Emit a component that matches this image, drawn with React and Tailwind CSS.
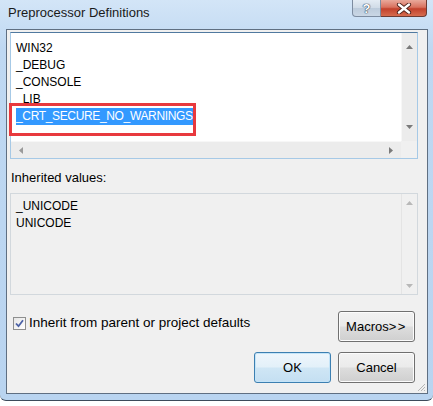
import React from 'react';

const defs = ['WIN32', '_DEBUG', '_CONSOLE', '_LIB'];
const inherited = ['_UNICODE', 'UNICODE'];

function Arrow({ dir, color }) {
  // small scrollbar triangles
  const pts = {
    up: '0,4 3.5,0 7,4',
    down: '0,0 7,0 3.5,4',
    left: '4,0 4,7 0,3.5',
    right: '0,0 0,7 4,3.5',
  }[dir];
  const horiz = dir === 'left' || dir === 'right';
  return (
    <svg width={horiz ? 4 : 7} height={horiz ? 7 : 4} viewBox={horiz ? '0 0 4 7' : '0 0 7 4'}>
      <polygon points={pts} fill={color} />
    </svg>
  );
}

function WinButton({ children, focused, className }) {
  return (
    <button
      className={
        'h-[31px] w-[77px] rounded-[3px] border text-[13px] text-black ' +
        (focused
          ? 'border-[#3c7fb1] bg-[linear-gradient(#eef6fc_0%,#e3f0f9_48%,#cfe6f5_52%,#c4dff2_100%)] shadow-[inset_0_0_0_1px_#c4e4f8] '
          : 'border-[#707070] bg-[linear-gradient(#f2f2f2_0%,#ebebeb_48%,#dddddd_52%,#cfcfcf_100%)] shadow-[inset_0_0_0_1px_#fcfcfc] ') +
        (className || '')
      }
    >
      {children}
    </button>
  );
}

function App() {
  return (
    <div className="w-[433px] h-[406px] bg-white font-['Liberation_Sans',Arial,sans-serif] overflow-hidden">
      <div className="w-[433px] h-[401px] rounded-b-[6px] border-b border-[#3d4a5a] bg-[linear-gradient(#d3e5f7_0%,#bfd8f2_12%,#b9d4f0_100%)] flex flex-col">
        {/* title bar */}
        <div className="h-[29px] flex justify-between items-start shrink-0">
          <div className="pl-[8px] pt-[5px] text-[13px] leading-[16px] text-[#1a1a1a]">Preprocessor Definitions</div>
          <div className="flex mr-[6px]">
            <div className="w-[29px] h-[17px] rounded-bl-[4px] border border-t-0 border-[#7d8ca0] bg-[linear-gradient(#e4ecf4_0%,#d0dbe7_50%,#bccbdb_51%,#cad7e5_100%)] flex items-center justify-center text-[13px] font-bold leading-none text-white [text-shadow:0_0_1px_#33455a,0_0_1px_#33455a,0_0_1px_#33455a]">
              ?
            </div>
            <div className="w-[46px] h-[17px] rounded-br-[4px] border border-l-0 border-t-0 border-[#6d3a32] bg-[linear-gradient(#e9a99b_0%,#d9725f_45%,#c2412c_55%,#d66c4f_100%)] flex items-center justify-center">
              <svg width="16" height="11" viewBox="0 0 16 11">
                <path d="M3 1.5 L13 9.5 M13 1.5 L3 9.5" stroke="#4a1f18" strokeWidth="4.2" strokeLinecap="round" />
                <path d="M3 1.5 L13 9.5 M13 1.5 L3 9.5" stroke="#ffffff" strokeWidth="2.4" strokeLinecap="round" />
              </svg>
            </div>
          </div>
        </div>

        {/* client area */}
        <div className="relative ml-[6px] w-[422px] h-[365px] border border-[#5f6f82] bg-[#f0f0f0] pl-[3px] pt-[2px] text-[12px] text-black">
          {/* preprocessor edit box */}
          <div className="relative w-[408px] h-[127px] border border-[#a6c9e6] border-t-[#50799f] bg-white grid grid-cols-[390px_16px] grid-rows-[108px_17px]">
            <div className="pl-[5px] pt-[7px] leading-[17px]">
              {defs.map((d) => (
                <div key={d}>{d}</div>
              ))}
              <div>
                <span className="inline-block bg-[#3399ff] text-white tracking-[-0.35px]">_CRT_SECURE_NO_WARNINGS</span>
              </div>
            </div>
            <div className="bg-[#ececec] border-l border-[#f7f7f7] flex flex-col items-center justify-between py-[12px]">
              <Arrow dir="up" color="#7a7a7a" />
              <Arrow dir="down" color="#7a7a7a" />
            </div>
            <div className="bg-[#ececec] border-t border-[#f7f7f7] flex items-center justify-between px-[8px]">
              <Arrow dir="left" color="#9a9a9a" />
              <Arrow dir="right" color="#7a7a7a" />
            </div>
            <div className="bg-[#f0f0f0]"></div>
            {/* red annotation */}
            <div className="absolute left-[-2px] top-[70px] w-[187px] h-[33px] border-[3px] border-[#e8393e]"></div>
          </div>

          <div className="mt-[11px] pl-[1px] text-[13px] leading-[15px]">Inherited values:</div>

          {/* inherited box */}
          <div className="mt-[8px] w-[408px] h-[102px] border border-[#d2d8dd] bg-[#f0f0f0] flex">
            <div className="flex-1 pl-[5px] pt-[4px] leading-[17px]">
              {inherited.map((d) => (
                <div key={d}>{d}</div>
              ))}
            </div>
            <div className="w-[16px] border-l border-[#e4e4e4] flex flex-col items-center justify-between pt-[7px] pb-[6px]">
              <Arrow dir="up" color="#b8b8b8" />
              <Arrow dir="down" color="#b8b8b8" />
            </div>
          </div>

          {/* bottom controls */}
          <div className="mt-[16px] w-[405px]">
            <div className="flex justify-between items-start">
              <label className="flex items-center mt-[5px] ml-[3px] leading-[14px]">
                <span className="w-[13px] h-[13px] border border-[#8e8f8f] bg-[linear-gradient(135deg,#e6e6e6,#ffffff)] flex items-center justify-center">
                  <svg width="9" height="9" viewBox="0 0 9 9">
                    <path d="M1 4.5 L3.5 7.2 L8 1.3" fill="none" stroke="#4b61a6" strokeWidth="1.8" />
                  </svg>
                </span>
                <span className="ml-[3px] text-[13.5px]">Inherit from parent or project defaults</span>
              </label>
              <WinButton>
                Macros<span className="tracking-[1.5px]">&gt;&gt;</span>
              </WinButton>
            </div>
            <div className="flex justify-end gap-[7px] mt-[10px]">
              <WinButton focused>OK</WinButton>
              <WinButton>Cancel</WinButton>
            </div>
          </div>

          {/* resize grip */}
          <svg className="absolute right-[1px] bottom-[1px]" width="10" height="10" viewBox="0 0 10 10">
            <path d="M9 2 L2 9 M9 5 L5 9 M9 8 L8 9" stroke="#b5b5b5" strokeWidth="1" />
          </svg>
        </div>
      </div>
    </div>
  );
}

export default App;
